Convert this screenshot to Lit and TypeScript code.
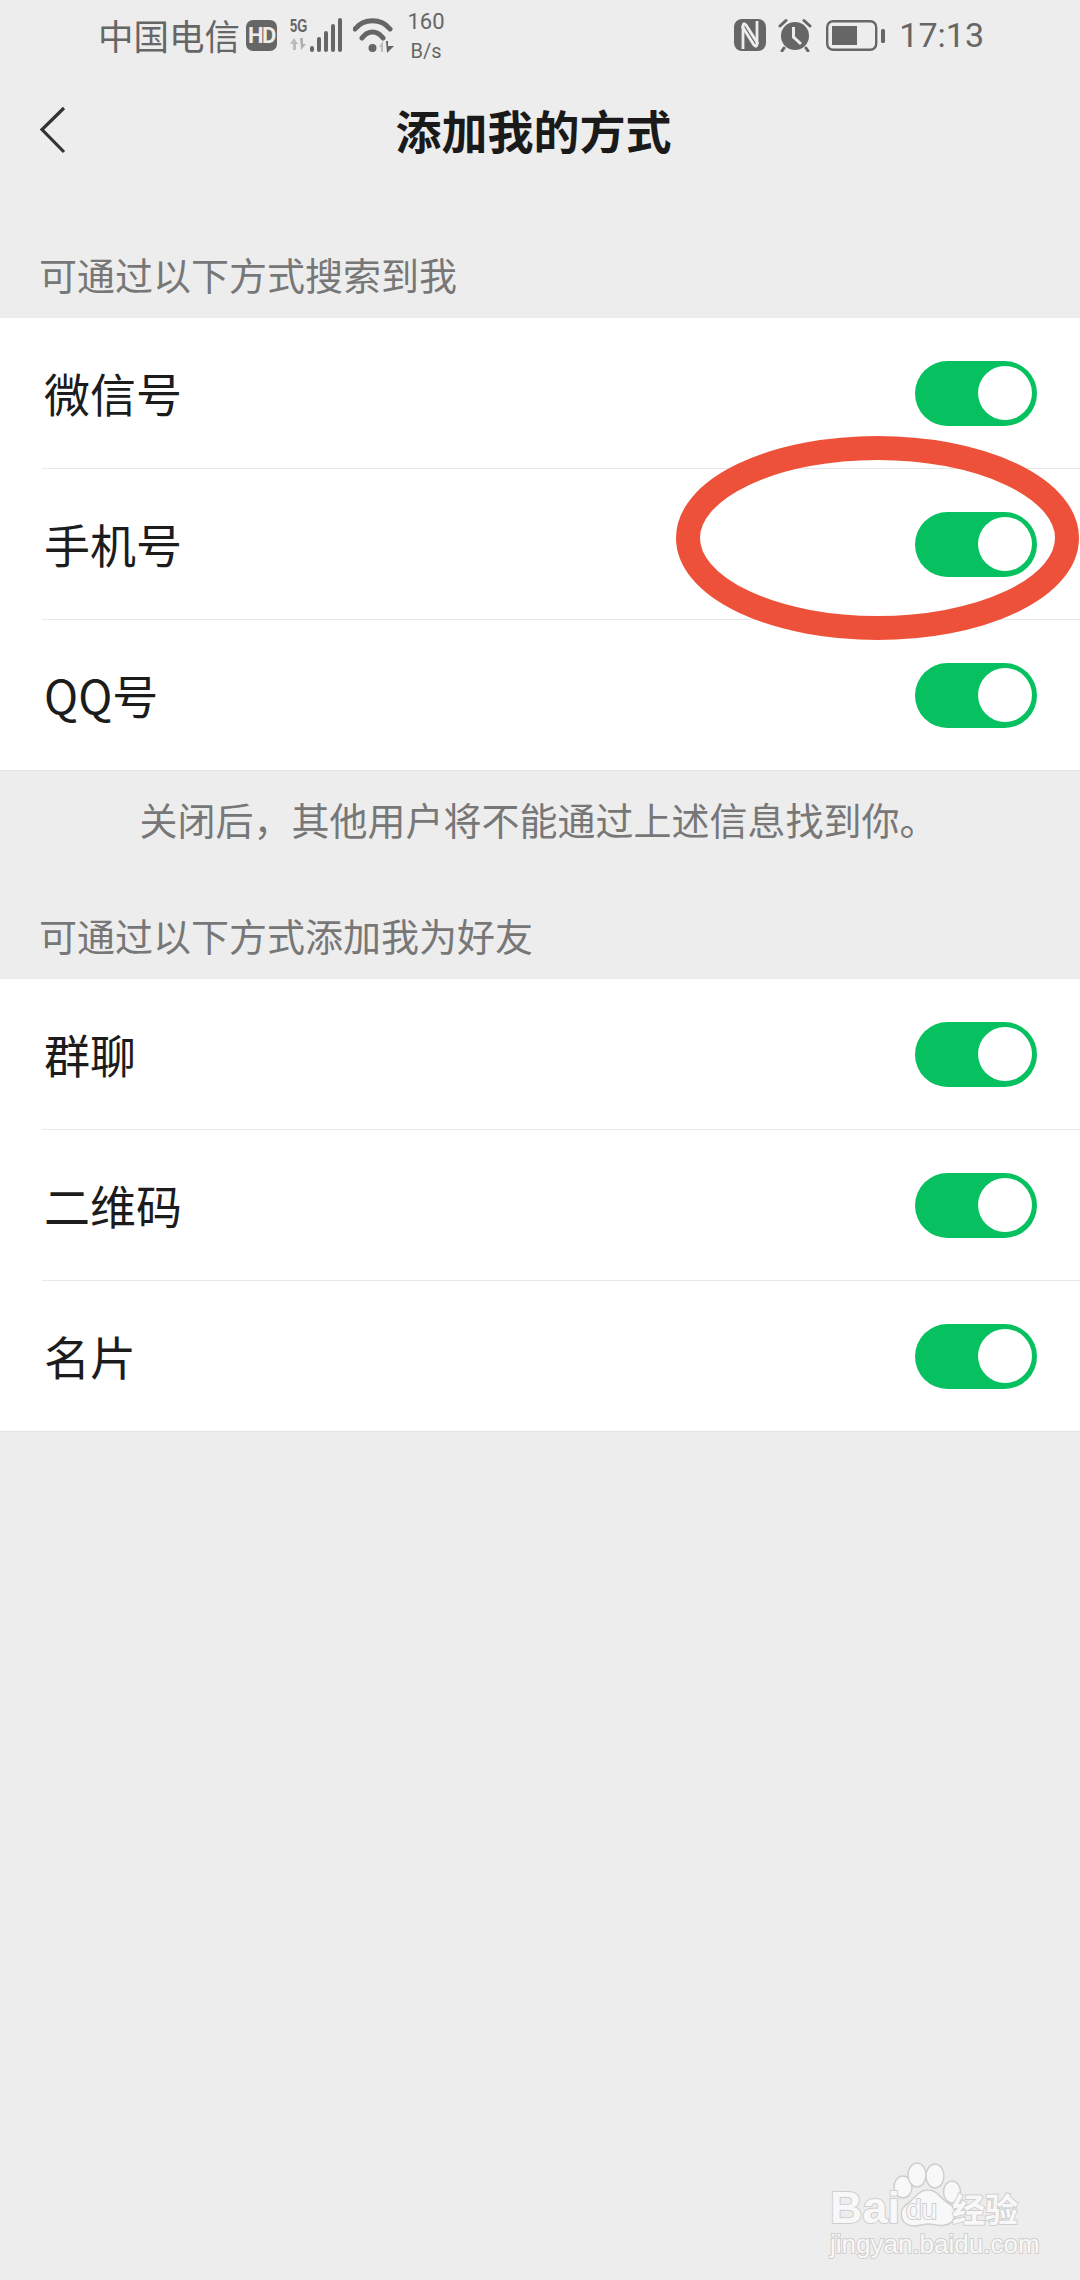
import { LitElement, html, css, svg } from "lit";
import { customElement } from "lit/decorators.js";

@customElement("status-bar")
class StatusBar extends LitElement {
  static styles = css`
    :host {
      display: flex;
      justify-content: space-between;
      align-items: center;
      height: 66px;
      padding: 4px 96px 0 98px;
      box-sizing: border-box;
      color: #666;
      font-family: "Noto Sans CJK SC", "Noto Sans", sans-serif;
    }
    .side {
      display: flex;
      align-items: center;
    }
    .carrier {
      font-size: 35.5px;
      line-height: 40px;
      width: 148px;
      white-space: nowrap;
    }
    .hd {
      width: 31px;
      height: 31px;
      border-radius: 7px;
      background: #666;
      color: #ededed;
      font: bold 22px/31px "Roboto", sans-serif;
      text-align: center;
      letter-spacing: -1.5px;
      margin-right: 13px;
    }
    .net {
      display: flex;
      flex-direction: column;
      width: 17px;
      height: 34px;
    }
    .five {
      font: bold 18px/16px "Liberation Sans", sans-serif;
      transform: scaleX(0.72);
      transform-origin: left;
      white-space: nowrap;
    }
    svg {
      display: block;
      flex: none;
    }
    .arrows {
      margin-top: 3px;
    }
    .bars {
      margin-left: 1px;
    }
    .wifi {
      margin-left: 8px;
    }
    .speed {
      font: 22px/32px "Roboto", sans-serif;
      text-align: center;
      width: 44px;
      margin-left: 9px;
    }
    .speed div:last-child {
      font-size: 20px;
      line-height: 26px;
    }
    .alarm {
      margin-left: 12px;
    }
    .battery {
      margin-left: 14px;
    }
    .time {
      font: 34px/40px "Roboto", sans-serif;
      margin-left: 14px;
      white-space: nowrap;
    }
  `;

  render() {
    return html`
      <div class="side">
        <span class="carrier">中国电信</span>
        <span class="hd">HD</span>
        <div class="net">
          <span class="five">5G</span>
          <svg class="arrows" width="17" height="14" viewBox="0 0 17 14">
            <path d="M4 1 L8 7 H6 V13 H3 V7 H0 Z" fill="#bcbcbc" />
            <path d="M10 1 H13 V7 H16 L11 13 Z" fill="#b0b0b0" />
          </svg>
        </div>
        <svg class="bars" width="37" height="36" viewBox="0 0 37 36">
          <rect x="2" y="29" width="4" height="6" rx="2" fill="#666" />
          <rect x="9" y="20" width="4" height="15" rx="2" fill="#666" />
          <rect x="16" y="14" width="4" height="21" rx="2" fill="#666" />
          <rect x="23" y="7" width="4" height="28" rx="2" fill="#666" />
          <rect x="30" y="1" width="4" height="34" rx="2" fill="#666" />
        </svg>
        <svg class="wifi" width="42" height="36" viewBox="0 0 42 36">
          <path d="M2 12 C11 1 28 1 37 12" fill="none" stroke="#666" stroke-width="5" stroke-linecap="round" />
          <path d="M9 21 C15 13 24 13 30 21" fill="none" stroke="#666" stroke-width="5" stroke-linecap="round" />
          <circle cx="19.5" cy="31" r="4" fill="#666" />
          <path d="M26 30 L30 24 V35 H28 V30 Z" fill="#bcbcbc" />
          <path d="M33 24 H35 V29 H41 L34 36 Z" fill="#666" />
        </svg>
        <div class="speed"><div>160</div><div>B/s</div></div>
      </div>
      <div class="side">
        <svg width="32" height="32" viewBox="0 0 32 32">
          <rect x="0" y="0" width="32" height="32" rx="8" fill="#666" />
          <path d="M9 30 V7 Q9 3 12 6 L24 25" fill="none" stroke="#ededed" stroke-width="2.8" />
          <path d="M23 2 V25 Q23 29 20 26 L8 7" fill="none" stroke="#ededed" stroke-width="2.8" />
        </svg>
        <svg class="alarm" width="34" height="34" viewBox="0 0 34 34">
          <circle cx="17" cy="18" r="14" fill="#666" />
          <path d="M2 8 L8 2.5 M32 8 L26 2.5 M6 30 L4 33 M28 30 L30 33" stroke="#666" stroke-width="3" stroke-linecap="round" />
          <path d="M15.5 9 V19 L23 26" fill="none" stroke="#ededed" stroke-width="3" />
        </svg>
        <svg class="battery" width="59" height="31" viewBox="0 0 59 31">
          <rect x="1.2" y="1.2" width="49" height="28.6" rx="6" fill="none" stroke="#666" stroke-width="2.4" />
          <rect x="6" y="6" width="25" height="19" fill="#666" />
          <rect x="55" y="9" width="4" height="14" rx="1.5" fill="#666" />
        </svg>
        <span class="time">17:13</span>
      </div>
    `;
  }
}

@customElement("app-root")
class AppRoot extends LitElement {
  static styles = css`
    :host {
      display: block;
    }
    .page {
      position: relative;
      width: 1080px;
      height: 2280px;
      overflow: hidden;
      background: #ededed;
      font-family: "Noto Sans CJK SC", "Noto Sans", sans-serif;
    }
    .nav {
      position: relative;
      display: flex;
      align-items: center;
      justify-content: center;
      height: 132px;
    }
    .back {
      position: absolute;
      left: 38px;
      top: 39px;
    }
    .title {
      font-size: 46px;
      font-weight: 700;
      color: #1a1a1a;
      line-height: 60px;
      margin: 0 13px 6px 0;
    }
    .label {
      display: flex;
      align-items: flex-end;
      box-sizing: border-box;
      padding: 0 0 22px 39px;
      font-size: 38px;
      line-height: 44px;
      color: #777;
    }
    .first {
      height: 120px;
    }
    .second {
      height: 107px;
    }
    .group {
      background: #fff;
      box-shadow: 0 1px 0 #e4e4e4;
    }
    .row {
      display: flex;
      align-items: center;
      justify-content: space-between;
      height: 150px;
      padding: 0 43px 0 44px;
    }
    .sep {
      height: 1px;
      margin-left: 42px;
      background: #e8e8e8;
    }
    .name {
      font-size: 46px;
      line-height: 60px;
      color: #1c1c1c;
      margin-bottom: 3px;
    }
    .toggle {
      position: relative;
      width: 122px;
      height: 65px;
      border-radius: 33px;
      background: #07c160;
    }
    .knob {
      position: absolute;
      right: 5px;
      top: 5px;
      width: 54px;
      height: 54px;
      border-radius: 50%;
      background: #fff;
    }
    .note {
      height: 102px;
      box-sizing: border-box;
      display: flex;
      align-items: center;
      justify-content: center;
      font-size: 38px;
      color: #777;
      white-space: nowrap;
      padding: 0 3px 5px 0;
    }
    .circle {
      position: absolute;
      left: 676px;
      top: 436px;
    }
    .mark {
      position: absolute;
      left: 826px;
      top: 2160px;
      width: 200px;
      height: 100px;
      color: #f8f8f8;
      font-family: "Liberation Sans", sans-serif;
    }
    .mark span {
      position: absolute;
      white-space: nowrap;
      -webkit-text-stroke: 2px #cfcfcf;
      paint-order: stroke fill;
    }
    .bai {
      left: 4px;
      top: 25px;
      font-size: 45px;
      line-height: 46px;
      font-weight: 700;
    }
    .du {
      left: 80px;
      top: 35px;
      font-size: 28px;
      line-height: 30px;
    }
    .jing {
      left: 126px;
      top: 29px;
      font: bold 33px/38px "Noto Sans CJK SC", sans-serif;
    }
    .url {
      left: 4px;
      top: 70px;
      font-size: 26px;
      line-height: 28px;
    }
    .paw {
      position: absolute;
      left: 66px;
      top: 2px;
    }
  `;

  private group(names: string[]) {
    return html`
      <div class="group">
        ${names.map(
          (n, i) => html`
            ${i ? html`<div class="sep"></div>` : ""}
            <div class="row">
              <span class="name">${n}</span>
              <div class="toggle"><div class="knob"></div></div>
            </div>
          `
        )}
      </div>
    `;
  }

  render() {
    return html`
      <div class="page">
        <status-bar></status-bar>
        <div class="nav">
          <svg class="back" width="30" height="50" viewBox="0 0 30 50">
            <path d="M26 3 L4 24.5 L26 47" fill="none" stroke="#333" stroke-width="3.2" />
          </svg>
          <span class="title">添加我的方式</span>
        </div>
        <div class="label first">可通过以下方式搜索到我</div>
        ${this.group(["微信号", "手机号", "QQ号"])}
        <div class="note">关闭后，其他用户将不能通过上述信息找到你。</div>
        <div class="label second">可通过以下方式添加我为好友</div>
        ${this.group(["群聊", "二维码", "名片"])}

        <svg class="circle" width="404" height="206" viewBox="0 0 404 206">
          <ellipse cx="201.5" cy="102" rx="189.5" ry="90" fill="none" stroke="#ee5139" stroke-width="24" />
        </svg>

        <div class="mark">
          <svg class="paw" width="72" height="66" viewBox="0 0 72 66">
            ${svg`
              <g fill="#f8f8f8" stroke="#cfcfcf" stroke-width="1.5">
                <ellipse cx="11" cy="25" rx="9" ry="11" />
                <ellipse cx="25" cy="13" rx="9" ry="12" />
                <ellipse cx="43" cy="14" rx="9" ry="12" />
                <ellipse cx="60" cy="30" rx="8.5" ry="11" />
                <path d="M36 28 C26 28 24 36 16 41 C5 48 8 64 22 64 C28 64 32 62 36 62 C42 62 46 65 53 63 C66 61 66 46 56 41 C47 36 46 28 36 28 Z" />
              </g>
            `}
          </svg>
          <span class="bai">Bai</span>
          <span class="du">du</span>
          <span class="jing">经验</span>
          <span class="url">jingyan.baidu.com</span>
        </div>
      </div>
    `;
  }
}
